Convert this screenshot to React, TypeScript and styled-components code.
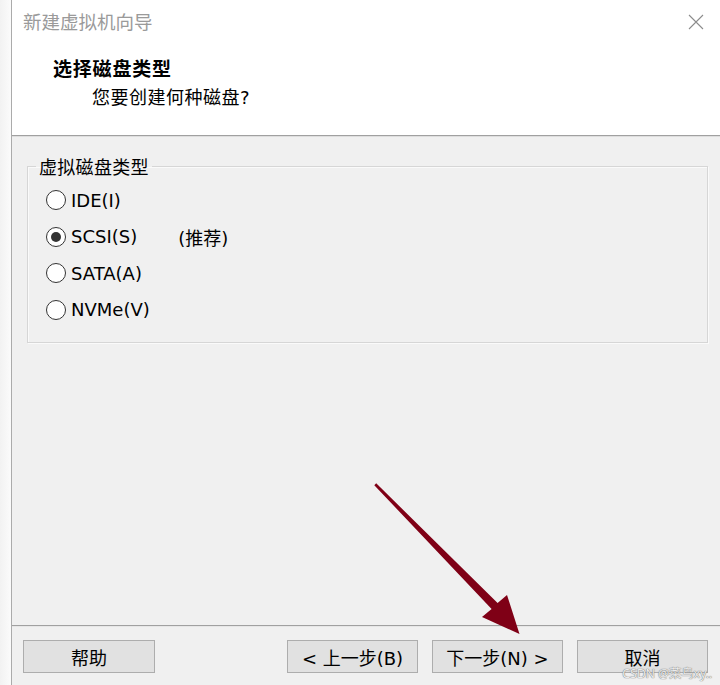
import React from "react";
import styled, { createGlobalStyle } from "styled-components";

const GlobalStyle = createGlobalStyle`
    *, *::before, *::after {
        box-sizing: border-box;
    }
    html, body {
        margin: 0;
        padding: 0;
        background: #ffffff;
    }
    body {
        font-family: "DejaVu Sans", "Noto Sans CJK SC", sans-serif;
        color: #000000;
    }
`;

const Screen = styled.div`
    position: relative;
    width: 720px;
    height: 685px;
    display: flex;
    overflow: hidden;
`;

const Desktop = styled.div`
    width: 11px;
    flex-shrink: 0;
    background: linear-gradient(to right, #f2f2f2, #fbfbfb);
`;

const Wizard = styled.div`
    flex: 1;
    display: flex;
    flex-direction: column;
    border-left: 1px solid #ababab;
    background: #f0f0f0;
`;

const Header = styled.header`
    height: 136px;
    flex-shrink: 0;
    background: #ffffff;
    border-bottom: 1px solid #a0a0a0;
    box-shadow: 0 1px 0 #dedede;
    display: flex;
    flex-direction: column;
`;

const TitleBar = styled.div`
    height: 44px;
    display: flex;
    align-items: center;
    justify-content: space-between;
    padding: 1px 16px 0 11px;
`;

const WindowTitle = styled.span`
    font-size: 18.5px;
    line-height: 24px;
    color: #9a9a9a;
`;

const CloseButton = styled.svg`
    width: 16px;
    height: 16px;
    margin-top: -2px;
`;

const Heading = styled.h1`
    margin: 12px 0 0 41px;
    font-size: 19px;
    letter-spacing: 0.8px;
    line-height: 26px;
    font-weight: bold;
`;

const SubHeading = styled.p`
    margin: 3px 0 0 80px;
    font-size: 18px;
    letter-spacing: 0.5px;
    line-height: 26px;
`;

const Body = styled.main`
    flex: 1;
    padding: 16px 12px 0 15px;
`;

const Group = styled.fieldset`
    margin: 0;
    padding: 2px 0 14px 8px;
    border: 1px solid #d6d6d6;
    box-shadow: 1px 1px 0 #fafafa, inset 1px 1px 0 #fafafa;
`;

const GroupLabel = styled.legend`
    padding: 4px 3px 0 3px;
    font-size: 18px;
    letter-spacing: 0.3px;
    line-height: 24px;
`;

const OptionList = styled.div`
    display: flex;
    flex-direction: column;
    padding-left: 10px;
`;

const Option = styled.label`
    height: 36.5px;
    display: flex;
    align-items: center;
    font-size: 18px;
`;

const RadioCircle = styled.span<{ $checked: boolean }>`
    width: 20px;
    height: 20px;
    border: 1.3px solid #333333;
    border-radius: 50%;
    background: #ffffff;
    display: flex;
    align-items: center;
    justify-content: center;
    margin-right: 5px;

    &::after {
        content: "";
        width: 10px;
        height: 10px;
        border-radius: 50%;
        background: ${(p) => (p.$checked ? "#333333" : "transparent")};
    }
`;

const Hint = styled.span`
    margin-left: 41px;
`;

const Footer = styled.footer`
    height: 60px;
    flex-shrink: 0;
    border-top: 1px solid #a0a0a0;
    box-shadow: inset 0 1px 0 #e6e6e6;
    display: flex;
    align-items: flex-start;
    padding: 14px 12px 0 11px;
    gap: 14px;
`;

const Button = styled.button<{ $wide?: boolean }>`
    width: ${(p) => (p.$wide ? "132px" : "131px")};
    height: 33px;
    border: 1px solid #adadad;
    background: #e1e1e1;
    font-family: inherit;
    font-size: 18px;
    color: #000000;
    padding: 0;
`;

const Spacer = styled.div`
    flex: 1;
`;

const Watermark = styled.span`
    position: absolute;
    right: 8px;
    bottom: 3px;
    font-family: "Noto Sans", "Noto Sans CJK SC", sans-serif;
    font-size: 12.5px;
    letter-spacing: -0.2px;
    line-height: 16px;
    color: #ececec;
    text-shadow: 0 0 1px #777777, 0 0 1px #777777;
`;

const ArrowLayer = styled.svg`
    position: absolute;
    left: 0;
    top: 0;
    width: 720px;
    height: 685px;
    pointer-events: none;
`;

const options = [
    { label: "IDE(I)", checked: false },
    { label: "SCSI(S)", checked: true, hint: "(推荐)" },
    { label: "SATA(A)", checked: false },
    { label: "NVMe(V)", checked: false },
];

export default function App() {
    return (
        <Screen>
            <GlobalStyle />
            <Desktop />
            <Wizard>
                <Header>
                    <TitleBar>
                        <WindowTitle>新建虚拟机向导</WindowTitle>
                        <CloseButton viewBox="0 0 16 16">
                            <path d="M1 1 L15 15 M15 1 L1 15" stroke="#8c8c8c" strokeWidth="1.1" fill="none" />
                        </CloseButton>
                    </TitleBar>
                    <Heading>选择磁盘类型</Heading>
                    <SubHeading>您要创建何种磁盘?</SubHeading>
                </Header>
                <Body>
                    <Group>
                        <GroupLabel>虚拟磁盘类型</GroupLabel>
                        <OptionList>
                            {options.map((o) => (
                                <Option key={o.label}>
                                    <RadioCircle $checked={o.checked} />
                                    {o.label}
                                    {o.hint && <Hint>{o.hint}</Hint>}
                                </Option>
                            ))}
                        </OptionList>
                    </Group>
                </Body>
                <Footer>
                    <Button $wide>帮助</Button>
                    <Spacer />
                    <Button>&lt; 上一步(B)</Button>
                    <Button>下一步(N) &gt;</Button>
                    <Button>取消</Button>
                </Footer>
            </Wizard>
            <ArrowLayer viewBox="0 0 720 685">
                <polygon
                    points="374.3,485.2 376.2,483.3 497.6,603 507,595 519.5,634 482,617 491.6,608.9"
                    fill="#7f0016"
                />
            </ArrowLayer>
            <Watermark>CSDN @菜鸟xy..</Watermark>
        </Screen>
    );
}
